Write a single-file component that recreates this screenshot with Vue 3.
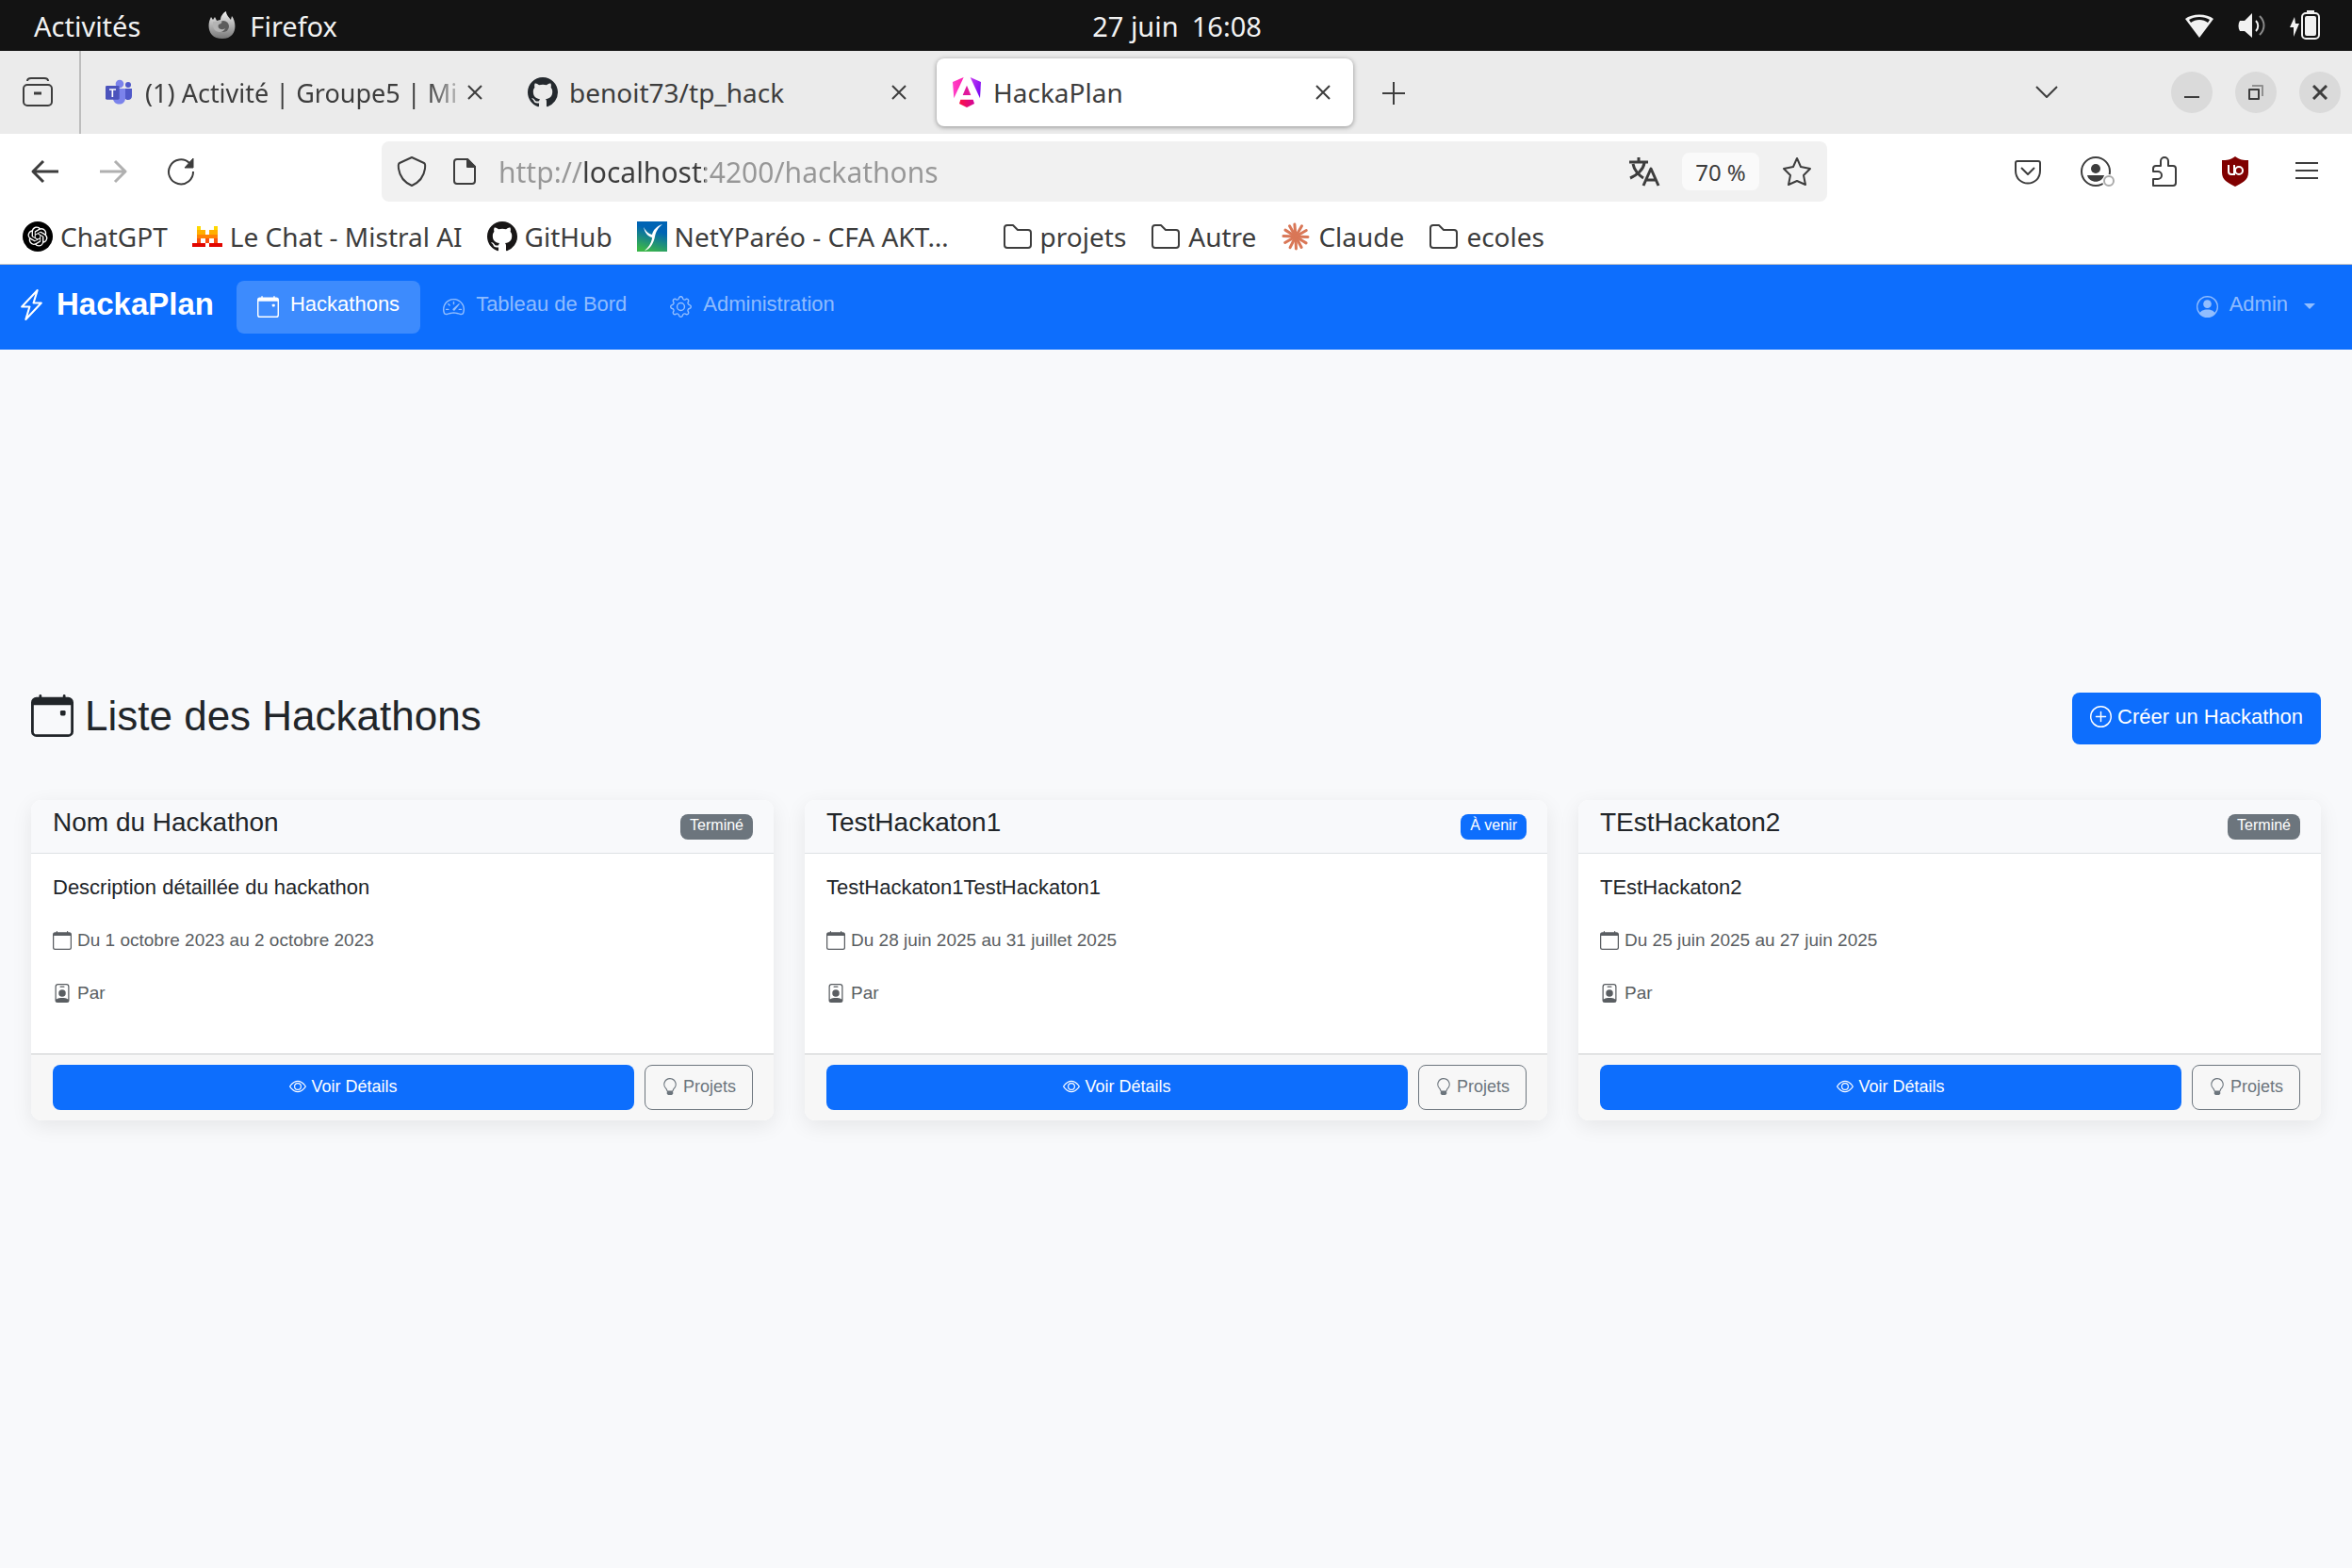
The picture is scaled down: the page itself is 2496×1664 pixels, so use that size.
<script setup>
import { h, ref } from 'vue'

const CALENDAR = 'M3.5 0a.5.5 0 0 1 .5.5V1h8V.5a.5.5 0 0 1 1 0V1h1a2 2 0 0 1 2 2v11a2 2 0 0 1-2 2H2a2 2 0 0 1-2-2V3a2 2 0 0 1 2-2h1V.5a.5.5 0 0 1 .5-.5M1 4v10a1 1 0 0 0 1 1h12a1 1 0 0 0 1-1V4z'

const icons = {
  calendar: [CALENDAR],
  calendarEvent: [CALENDAR, 'M11 6.5a.5.5 0 0 1 .5-.5h1a.5.5 0 0 1 .5.5v1a.5.5 0 0 1-.5.5h-1a.5.5 0 0 1-.5-.5z'],
  badge: [
    'M6.5 2a.5.5 0 0 0 0 1h3a.5.5 0 0 0 0-1zM11 8a3 3 0 1 1-6 0 3 3 0 0 1 6 0',
    'M4.5 0A2.5 2.5 0 0 0 2 2.5V14a2 2 0 0 0 2 2h8a2 2 0 0 0 2-2V2.5A2.5 2.5 0 0 0 11.5 0zM3 2.5A1.5 1.5 0 0 1 4.5 1h7A1.5 1.5 0 0 1 13 2.5v10.795a4.2 4.2 0 0 0-.776-.492C11.392 12.387 10.063 12 8 12s-3.392.387-4.224.803a4.2 4.2 0 0 0-.776.492z',
  ],
  eye: [
    'M16 8s-3-5.5-8-5.5S0 8 0 8s3 5.5 8 5.5S16 8 16 8M1.173 8a13 13 0 0 1 1.66-2.043C4.12 4.668 5.88 3.5 8 3.5s3.879 1.168 5.168 2.457A13 13 0 0 1 14.828 8q-.086.13-.195.288c-.335.48-.83 1.12-1.465 1.755C11.879 11.332 10.119 12.5 8 12.5s-3.879-1.168-5.168-2.457A13 13 0 0 1 1.172 8z',
    'M8 5.5a2.5 2.5 0 1 0 0 5 2.5 2.5 0 0 0 0-5M4.5 8a3.5 3.5 0 1 1 7 0 3.5 3.5 0 0 1-7 0',
  ],
  bulb: ['M2 6a6 6 0 1 1 10.174 4.31c-.203.196-.359.4-.453.619l-.762 1.769A.5.5 0 0 1 10.5 13a.5.5 0 0 1 0 1 .5.5 0 0 1 0 1l-.224.447a1 1 0 0 1-.894.553H6.618a1 1 0 0 1-.894-.553L5.5 15a.5.5 0 0 1 0-1 .5.5 0 0 1 0-1 .5.5 0 0 1-.46-.302l-.761-1.77a2 2 0 0 0-.453-.618A5.98 5.98 0 0 1 2 6m6-5a5 5 0 0 0-3.479 8.592c.263.254.514.564.676.941L5.83 12h4.342l.632-1.467c.162-.377.413-.687.676-.941A5 5 0 0 0 8 1'],
  plus: [
    'M8 15A7 7 0 1 1 8 1a7 7 0 0 1 0 14m0 1A8 8 0 1 0 8 0a8 8 0 0 0 0 16',
    'M8 4a.5.5 0 0 1 .5.5v3h3a.5.5 0 0 1 0 1h-3v3a.5.5 0 0 1-1 0v-3h-3a.5.5 0 0 1 0-1h3v-3A.5.5 0 0 1 8 4',
  ],
  bolt: ['M11.251.068a.5.5 0 0 1 .227.58L9.677 6.5H13a.5.5 0 0 1 .364.843l-8 8.5a.5.5 0 0 1-.842-.49L6.323 9.5H3a.5.5 0 0 1-.364-.843l8-8.5a.5.5 0 0 1 .615-.09zM4.157 8.5H7a.5.5 0 0 1 .478.647L6.11 13.59l5.732-6.09H9a.5.5 0 0 1-.478-.647L9.89 2.41z'],
  person: [
    'M11 6a3 3 0 1 1-6 0 3 3 0 0 1 6 0',
    'M0 8a8 8 0 1 1 16 0A8 8 0 0 1 0 8m8-7a7 7 0 0 0-5.468 11.37C3.242 11.226 4.805 10 8 10s4.757 1.225 5.468 2.37A7 7 0 0 0 8 1',
  ],
  speed: [
    'M8 4a.5.5 0 0 1 .5.5V6a.5.5 0 0 1-1 0V4.5A.5.5 0 0 1 8 4M3.732 5.732a.5.5 0 0 1 .707 0l.915.914a.5.5 0 1 1-.708.708l-.914-.915a.5.5 0 0 1 0-.707M2 10a.5.5 0 0 1 .5-.5h1.586a.5.5 0 0 1 0 1H2.5A.5.5 0 0 1 2 10m9.5 0a.5.5 0 0 1 .5-.5h1.5a.5.5 0 0 1 0 1H12a.5.5 0 0 1-.5-.5m.754-4.246a.39.39 0 0 0-.527-.02L7.547 9.31a.91.91 0 1 0 1.302 1.258l3.434-4.297a.39.39 0 0 0-.029-.518z',
    'M0 10a8 8 0 1 1 15.547 2.661c-.442 1.253-1.845 1.602-2.932 1.25C11.309 13.488 9.475 13 8 13c-1.474 0-3.31.488-4.615.911-1.087.352-2.49.003-2.932-1.25A8 8 0 0 1 0 10m8-7a7 7 0 0 0-6.603 9.329c.203.575.923.876 1.68.63C4.397 12.533 6.358 12 8 12s3.604.532 4.923.96c.757.245 1.477-.056 1.68-.631A7 7 0 0 0 8 3',
  ],
  gear: [
    'M8 4.754a3.246 3.246 0 1 0 0 6.492 3.246 3.246 0 0 0 0-6.492M5.754 8a2.246 2.246 0 1 1 4.492 0 2.246 2.246 0 0 1-4.492 0',
    'M9.796 1.343c-.527-1.79-3.065-1.79-3.592 0l-.094.319a.873.873 0 0 1-1.255.52l-.292-.16c-1.64-.892-3.433.902-2.54 2.541l.159.292a.873.873 0 0 1-.52 1.255l-.319.094c-1.79.527-1.79 3.065 0 3.592l.319.094a.873.873 0 0 1 .52 1.255l-.16.292c-.892 1.64.901 3.434 2.541 2.54l.292-.159a.873.873 0 0 1 1.255.52l.094.319c.527 1.79 3.065 1.79 3.592 0l.094-.319a.873.873 0 0 1 1.255-.52l.292.16c1.64.893 3.434-.902 2.54-2.541l-.159-.292a.873.873 0 0 1 .52-1.255l.319-.094c1.79-.527 1.79-3.065 0-3.592l-.319-.094a.873.873 0 0 1-.52-1.255l.16-.292c.893-1.64-.902-3.433-2.541-2.54l-.292.159a.873.873 0 0 1-1.255-.52zm-2.633.283c.246-.835 1.428-.835 1.674 0l.094.319a1.873 1.873 0 0 0 2.693 1.115l.291-.16c.764-.415 1.6.42 1.184 1.185l-.159.292a1.873 1.873 0 0 0 1.116 2.692l.318.094c.835.246.835 1.428 0 1.674l-.319.094a1.873 1.873 0 0 0-1.115 2.693l.16.291c.415.764-.42 1.6-1.185 1.184l-.291-.159a1.873 1.873 0 0 0-2.693 1.116l-.094.318c-.246.835-1.428.835-1.674 0l-.094-.319a1.873 1.873 0 0 0-2.692-1.115l-.292.16c-.764.415-1.6-.42-1.184-1.185l.159-.291A1.873 1.873 0 0 0 1.945 8.93l-.319-.094c-.835-.246-.835-1.428 0-1.674l.319-.094A1.873 1.873 0 0 0 3.06 4.377l-.16-.292c-.415-.764.42-1.6 1.185-1.184l.292.159a1.873 1.873 0 0 0 2.692-1.115z',
  ],
  github: ['M8 0C3.58 0 0 3.58 0 8c0 3.54 2.29 6.53 5.47 7.59.4.07.55-.17.55-.38 0-.19-.01-.82-.01-1.49-2.01.37-2.53-.49-2.69-.94-.09-.23-.48-.94-.82-1.13-.28-.15-.68-.52-.01-.53.63-.01 1.08.58 1.23.82.72 1.21 1.87.87 2.33.66.07-.52.28-.87.51-1.07-1.78-.2-3.64-.89-3.64-3.95 0-.87.31-1.59.82-2.15-.08-.2-.36-1.02.08-2.12 0 0 .67-.21 2.2.82.64-.18 1.32-.27 2-.27s1.36.09 2 .27c1.53-1.04 2.2-.82 2.2-.82.44 1.1.16 1.92.08 2.12.51.56.82 1.27.82 2.15 0 3.07-1.87 3.75-3.65 3.95.29.25.54.73.54 1.48 0 1.07-.01 1.93-.01 2.2 0 .21.15.46.55.38A8.01 8.01 0 0 0 16 8c0-4.42-3.58-8-8-8'],
}

const Icon = (props) =>
  h('svg', { viewBox: '0 0 16 16', fill: 'currentColor', 'aria-hidden': 'true' },
    icons[props.name].map((d) => h('path', { d, 'fill-rule': props.name === 'person' ? 'evenodd' : undefined })))
Icon.props = ['name']

const address = ref('http://localhost:4200/hackathons')
const rays = [2, 32, 62, 88, 117, 150, 182, 212, 240, 265, 300, 330]

const hackathons = [
  { name: 'Nom du Hackathon', status: 'Terminé', text: 'Description détaillée du hackathon', dates: 'Du 1 octobre 2023 au 2 octobre 2023' },
  { name: 'TestHackaton1', status: 'À venir', text: 'TestHackaton1TestHackaton1', dates: 'Du 28 juin 2025 au 31 juillet 2025' },
  { name: 'TEstHackaton2', status: 'Terminé', text: 'TEstHackaton2', dates: 'Du 25 juin 2025 au 27 juin 2025' },
]
</script>

<template>
  <div class="screen">
    <header class="system">
      <div class="system-left">
        <button class="plain">Activités</button>
        <button class="plain app-menu">
          <svg width="30" height="30" viewBox="0 0 30 30" aria-hidden="true">
            <defs><linearGradient id="fox" x1="0" y1="0" x2="0" y2="1"><stop offset="0" stop-color="#f2f2f2" /><stop offset="1" stop-color="#777" /></linearGradient></defs>
            <path d="M3 6l2 3 2-3 2 4 4-1c0-3 2-7 6-9 0 4 3 6 5 9l1-4c6 8 5 24-10 24C0 29-2 15 3 6z" fill="url(#fox)" />
            <circle cx="16" cy="16" r="6" fill="#5c5c5c" />
            <path d="M5 11l9-1c1 2 0 3-3 4-2 4 3 7 7 4-2 6-12 5-13-2z" fill="#b4b4b4" />
          </svg>
          <span>Firefox</span>
        </button>
      </div>
      <time class="clock" datetime="2025-06-27T16:08"><span>27 juin</span><span>16:08</span></time>
      <div class="tray">
        <svg width="32" height="32" viewBox="0 0 32 32" aria-label="Wi-Fi">
          <path d="M16 29L1 9C8 3 24 3 31 9z" fill="#f2f2f2" />
          <path d="M5 10c6-4 16-4 22 0l-2 3c-5-4-13-4-18 0z" fill="#131313" />
        </svg>
        <svg width="32" height="32" viewBox="0 0 32 32" fill="none" aria-label="Volume">
          <path d="M3 11h5l8-8v26l-8-7H3c-2-3-2-8 0-11z" fill="#f2f2f2" />
          <path d="M20 11c3 3 3 8 0 11" stroke="#f2f2f2" stroke-width="2" /><path d="M24 6c6 6 6 14 0 20" stroke="#8a8a8a" stroke-width="2" />
        </svg>
        <svg width="32" height="32" viewBox="0 0 32 32" aria-label="Batterie en charge">
          <path d="M5 7L0 18h4v10l6-14H6z" fill="#f2f2f2" />
          <rect x="18" y="0" width="8" height="4" fill="#f2f2f2" /><rect x="13" y="3" width="18" height="27" rx="4" fill="none" stroke="#f2f2f2" stroke-width="2" /><rect x="16" y="6" width="12" height="21" rx="2" fill="#f2f2f2" />
        </svg>
      </div>
    </header>

    <div class="tabbar">
      <button class="plain view-all" aria-label="Firefox View">
        <svg class="i32 line" viewBox="0 0 32 32"><path d="M5 4c0-2 2-3 4-3h14c2 0 4 1 4 3" /><rect x="1" y="8" width="30" height="22" rx="4" /><path d="M12 17h8" stroke-width="3" /></svg>
      </button>
      <div class="tabs" role="tablist">
        <div class="tab" role="tab">
          <svg class="i32" viewBox="-6 -6 96 96" aria-hidden="true">
            <circle cx="72" cy="18" r="9" fill="#5059c9" /><path d="M56 30h28v24c0 16-22 16-24 2z" fill="#5059c9" />
            <circle cx="45" cy="15" r="13" fill="#7b83eb" /><path d="M28 30h35v30c0 26-37 26-39 2z" fill="#7b83eb" />
            <rect x="0" y="21" width="44" height="44" rx="4" fill="#4b53bc" /><path d="M12 33h21M22 33v24" stroke="#fff" stroke-width="5" />
          </svg>
          <span class="tab-label fade">(1) Activité | Groupe5 | Mi</span>
          <button class="plain close" aria-label="Fermer"><svg class="i16 line" viewBox="0 0 16 16"><path d="M1 1l14 14M15 1L1 15" /></svg></button>
        </div>
        <div class="tab" role="tab">
          <Icon name="github" class="i32 mark" />
          <span class="tab-label">benoit73/tp_hack</span>
          <button class="plain close" aria-label="Fermer"><svg class="i16 line" viewBox="0 0 16 16"><path d="M1 1l14 14M15 1L1 15" /></svg></button>
        </div>
        <div class="tab active" role="tab">
          <svg class="i32" viewBox="90 96 96 96" aria-hidden="true">
            <defs><linearGradient id="ng" x1="0" y1="0" x2="1" y2="0"><stop offset="0" stop-color="#ff41c8" /><stop offset="1" stop-color="#ff1fb0" /></linearGradient><linearGradient id="ng2" x1="0" y1="0" x2="1" y2="1"><stop offset="0" stop-color="#c93df0" /><stop offset="1" stop-color="#6a00f5" /></linearGradient><linearGradient id="ng3" x1="0" y1="0" x2="1" y2="0"><stop offset="0" stop-color="#ff1040" /><stop offset="1" stop-color="#d1059a" /></linearGradient></defs>
            <path d="M93 111l35-15-31 67z" fill="url(#ng)" /><path d="M149 96l34 15-3 52z" fill="url(#ng2)" />
            <path d="M138 122l13 31h-26z" fill="#e0189c" /><path d="M118 167h40l4 13-24 12-24-12z" fill="url(#ng3)" />
          </svg>
          <span class="tab-label">HackaPlan</span>
          <button class="plain close" aria-label="Fermer"><svg class="i16 line" viewBox="0 0 16 16"><path d="M1 1l14 14M15 1L1 15" /></svg></button>
        </div>
      </div>
      <button class="plain new-tab" aria-label="Nouvel onglet"><svg class="i32 line" viewBox="0 0 32 32"><path d="M16 5v24M4 17h24" /></svg></button>
      <div class="window">
        <button class="plain all-tabs" aria-label="Lister les onglets"><svg class="i32 line" viewBox="0 0 32 32"><path d="M5 10l11 11 11-11" /></svg></button>
        <button class="plain round" aria-label="Réduire"><svg class="i16 line" viewBox="0 0 16 16"><path d="M0 13h16" /></svg></button>
        <button class="plain round" aria-label="Restaurer"><svg class="i16 line" viewBox="0 0 16 16"><path d="M4 1h11v11" stroke="#909090" /><rect x="1" y="5" width="10" height="10" /></svg></button>
        <button class="plain round" aria-label="Fermer la fenêtre"><svg class="i16 line" viewBox="0 0 16 16"><path d="M1 1l14 14M15 1L1 15" stroke-width="3" /></svg></button>
      </div>
    </div>

    <div class="toolbar">
      <div class="history">
        <button class="plain" aria-label="Précédent"><svg class="i32 line" viewBox="0 0 32 32"><path d="M30 16H4M14 5L3 16l11 11" stroke-width="3" /></svg></button>
        <button class="plain off" aria-label="Suivant"><svg class="i32 line" viewBox="0 0 32 32"><path d="M2 16h26M18 5l11 11-11 11" stroke-width="3" /></svg></button>
        <button class="plain" aria-label="Actualiser"><svg class="i32 line" viewBox="0 0 32 32"><path d="M29 16a13 13 0 1 1-4-9" /><path d="M29 2v10H20z" fill="#3d3d3d" stroke-width="1" /></svg></button>
      </div>
      <div class="address">
        <svg class="i32 line" viewBox="0 0 32 32" aria-hidden="true"><path d="M16 1l13 6c2 1 1 4 1 6-1 7-5 14-14 18C7 27 3 20 2 13c0-2-1-5 1-6z" /></svg>
        <svg class="i32 line doc" viewBox="0 0 32 32" aria-hidden="true"><path d="M19 3H8a3 3 0 0 0-3 3v20a3 3 0 0 0 3 3h16a3 3 0 0 0 3-3V11z" /><path d="M19 3v8h8z" fill="#3d3d3d" /></svg>
        <input v-model="address" class="url" aria-label="Adresse" spellcheck="false" />
        <button class="plain" aria-label="Traduire"><svg class="i32 line" viewBox="0 0 32 32"><path d="M0 6h20M10 1v5M4 8c1 6 6 12 11 15M16 7C15 14 8 20 1 23" stroke-width="3" /><path d="M15 31l8-18 8 18M18 25h10" stroke-width="3" /></svg></button>
        <button class="plain zoom">70 %</button>
        <button class="plain" aria-label="Marquer cette page"><svg class="i32 line" viewBox="0 0 32 32"><path d="M16 2l4 9 10 2-7 7 2 10-9-4-9 4 2-10-7-7 10-2z" /></svg></button>
      </div>
      <div class="tools">
        <button class="plain" aria-label="Pocket"><svg class="i32 line" viewBox="0 0 32 32"><path d="M5 5h22a2 2 0 0 1 2 2v8c0 18-26 18-26 0V7a2 2 0 0 1 2-2z" /><path d="M9 12l7 7 7-7" /></svg></button>
        <button class="plain account" aria-label="Compte"><svg class="i32 line" viewBox="0 0 32 32"><circle cx="14" cy="16" r="15" /><circle cx="14" cy="13" r="5" fill="#3d3d3d" stroke="none" /><path d="M5 20h18c-2 9-16 9-18 0z" fill="#3d3d3d" stroke="none" /><circle cx="28" cy="26" r="7" fill="#fff" stroke="none" /><circle cx="28" cy="26" r="5" stroke="#aaa" /></svg></button>
        <button class="plain" aria-label="Extensions"><svg class="i32 line" viewBox="3 0 32 32"><path d="M4 31h21a3 3 0 0 0 3-3V13a3 3 0 0 0-3-3h-5V5a4 4 0 0 0-8 0v5H7a3 3 0 0 0-3 3v3h5a4 4 0 0 1 0 8H4z" /></svg></button>
        <button class="plain" aria-label="uBlock Origin"><svg class="i32" viewBox="2 0 32 32"><path d="M16 0c5 4 9 4 14 4v13c0 8-6 11-14 15C8 28 2 25 2 17V4c5 0 9 0 14-4z" fill="#800000" /><path d="M9 9v7a3 3 0 0 0 3 3h3V9" fill="none" stroke="#fff" stroke-width="2" /><circle cx="20" cy="15" r="4" fill="none" stroke="#fff" stroke-width="2" /></svg></button>
        <button class="plain" aria-label="Menu"><svg class="i32 line" viewBox="0 0 32 32"><path d="M4 7h24M4 15h24M4 23h24" /></svg></button>
      </div>
    </div>

    <nav class="bookmarks" aria-label="Marque-pages">
      <a href="#">
        <svg class="i32" viewBox="0 0 32 32" aria-hidden="true"><circle cx="16" cy="16" r="16" /><g transform="translate(5.5 5.5) scale(.875)" fill="#fff"><path d="M22.2819 9.8211a5.9847 5.9847 0 0 0-.5157-4.9108 6.0462 6.0462 0 0 0-6.5098-2.9A6.0651 6.0651 0 0 0 4.9807 4.1818a5.9847 5.9847 0 0 0-3.9977 2.9 6.0462 6.0462 0 0 0 .7427 7.0966 5.98 5.98 0 0 0 .511 4.9107 6.051 6.051 0 0 0 6.5146 2.9001A5.9847 5.9847 0 0 0 13.2599 24a6.0557 6.0557 0 0 0 5.7718-4.2058 5.9894 5.9894 0 0 0 3.9977-2.9001 6.0557 6.0557 0 0 0-.7475-7.0729zm-9.022 12.6081a4.4755 4.4755 0 0 1-2.8764-1.0408l.1419-.0804 4.7783-2.7582a.7948.7948 0 0 0 .3927-.6813v-6.7369l2.02 1.1686a.071.071 0 0 1 .038.052v5.5826a4.504 4.504 0 0 1-4.4945 4.4944zm-9.6607-4.1254a4.4708 4.4708 0 0 1-.5346-3.0137l.142.0852 4.783 2.7582a.7712.7712 0 0 0 .7806 0l5.8428-3.3685v2.3324a.0804.0804 0 0 1-.0332.0615L9.74 19.9502a4.4992 4.4992 0 0 1-6.1408-1.6464zM2.3408 7.8956a4.485 4.485 0 0 1 2.3655-1.9728V11.6a.7664.7664 0 0 0 .3879.6765l5.8144 3.3543-2.0201 1.1685a.0757.0757 0 0 1-.071 0l-4.8303-2.7865A4.504 4.504 0 0 1 2.3408 7.872zm16.5963 3.8558L13.1038 8.364 15.1192 7.2a.0757.0757 0 0 1 .071 0l4.8303 2.7913a4.4944 4.4944 0 0 1-.6765 8.1042v-5.6772a.79.79 0 0 0-.407-.667zm2.0107-3.0231l-.142-.0852-4.7735-2.7818a.7759.7759 0 0 0-.7854 0L9.409 9.2297V6.8974a.0662.0662 0 0 1 .0284-.0615l4.8303-2.7866a4.4992 4.4992 0 0 1 6.6802 4.66zM8.3065 12.863l-2.02-1.1638a.0804.0804 0 0 1-.038-.0567V6.0742a4.4992 4.4992 0 0 1 7.3757-3.4537l-.142.0805L8.704 5.459a.7948.7948 0 0 0-.3927.6813zm1.0976-2.3654l2.602-1.4998 2.6069 1.4998v2.9994l-2.5974 1.4997-2.6067-1.4997Z" /></g></svg>
        <span>ChatGPT</span>
      </a>
      <a href="#">
        <svg class="i32" viewBox="0 0 7 7" aria-hidden="true" shape-rendering="crispEdges"><path d="M1 1h1v1H1zM5 1h1v1H5z" fill="#ffd800" /><path d="M1 2h2v1H1zM4 2h2v1H4z" fill="#ffaf00" /><path d="M1 3h5v1H1z" fill="#ff8205" /><path d="M1 4h1v1H1zM3 4h1v1H3zM5 4h1v1H5z" fill="#fa500f" /><path d="M0 5h3v1H0zM4 5h3v1H4z" fill="#e10500" /></svg>
        <span>Le Chat - Mistral AI</span>
      </a>
      <a href="#"><Icon name="github" class="i32 mark-dark" /><span>GitHub</span></a>
      <a href="#">
        <svg class="i32" viewBox="0 0 32 32" aria-hidden="true"><defs><linearGradient id="nety" x1=".7" y1="0" x2=".4" y2="1"><stop offset=".3" stop-color="#0064b4" /><stop offset="1" stop-color="#3ab54a" /></linearGradient></defs><rect width="32" height="32" fill="url(#nety)" /><path d="M7 6c2 4 5 7 9 8 1-5 5-9 11-11-5 4-7 8-8 13-1 6-5 14-11 15 5-4 8-10 8-14-5-1-8-6-9-11z" fill="#fff" /></svg>
        <span class="clipped">NetYParéo - CFA AKT…</span>
      </a>
      <a href="#"><svg class="i32 line" viewBox="0 0 32 32" aria-hidden="true"><path d="M2 7a3 3 0 0 1 3-3h6l5 5h11a3 3 0 0 1 3 3v13a3 3 0 0 1-3 3H5a3 3 0 0 1-3-3z" /></svg><span>projets</span></a>
      <a href="#"><svg class="i32 line" viewBox="0 0 32 32" aria-hidden="true"><path d="M2 7a3 3 0 0 1 3-3h6l5 5h11a3 3 0 0 1 3 3v13a3 3 0 0 1-3 3H5a3 3 0 0 1-3-3z" /></svg><span>Autre</span></a>
      <a href="#">
        <svg class="i32" viewBox="-16 -16 32 32" stroke="#d97757" stroke-width="3" stroke-linecap="round" aria-hidden="true"><path v-for="r in rays" :key="r" d="M0 0H13" :transform="`rotate(${r})`" /></svg>
        <span>Claude</span>
      </a>
      <a href="#"><svg class="i32 line" viewBox="0 0 32 32" aria-hidden="true"><path d="M2 7a3 3 0 0 1 3-3h6l5 5h11a3 3 0 0 1 3 3v13a3 3 0 0 1-3 3H5a3 3 0 0 1-3-3z" /></svg><span>ecoles</span></a>
    </nav>

    <div class="site">
      <nav class="navbar">
        <a class="brand" href="#"><Icon name="bolt" class="i33" /><span>HackaPlan</span></a>
        <a class="nav-link current" href="#"><Icon name="calendarEvent" class="i23" /><span>Hackathons</span></a>
        <a class="nav-link" href="#"><Icon name="speed" class="i23" /><span>Tableau de Bord</span></a>
        <a class="nav-link" href="#"><Icon name="gear" class="i23" /><span>Administration</span></a>
        <button class="nav-link user"><Icon name="person" class="i23" /><span>Admin</span><i class="caret"></i></button>
      </nav>

      <main>
        <div class="heading">
          <h1><Icon name="calendarEvent" class="i45" /><span>Liste des Hackathons</span></h1>
          <button class="create"><Icon name="plus" class="i23" /><span>Créer un Hackathon</span></button>
        </div>
        <div class="cards">
          <article v-for="item in hackathons" :key="item.name" class="card">
            <header class="card-head">
              <h2>{{ item.name }}</h2>
              <span class="status" :class="{ upcoming: item.status === 'À venir' }">{{ item.status }}</span>
            </header>
            <div class="card-body">
              <p>{{ item.text }}</p>
              <p class="meta"><Icon name="calendar" class="i20" /><span>{{ item.dates }}</span></p>
              <p class="meta"><Icon name="badge" class="i20" /><span>Par</span></p>
            </div>
            <footer class="card-foot">
              <button class="details"><Icon name="eye" class="i18" /><span>Voir Détails</span></button>
              <button class="projects"><Icon name="bulb" class="i18" /><span>Projets</span></button>
            </footer>
          </article>
        </div>
      </main>
    </div>
  </div>
</template>

<style>
body { margin: 0; background: #f8f9fb; }
</style>

<style scoped>
.screen { min-height: 100vh; font-family: "Noto Sans", sans-serif; font-size: 29px; color: #3d3d3d; }
.screen * { box-sizing: border-box; }
svg { display: block; flex: none; }
a { color: inherit; text-decoration: none; }
.plain { display: flex; align-items: center; padding: 0; border: 0; background: none; color: inherit; font: inherit; }
.line { fill: none; stroke: #3d3d3d; stroke-width: 2; stroke-linejoin: round; }
.i16 { width: 16px; height: 16px; }
.i18 { width: 18px; height: 18px; }
.i20 { width: 20px; height: 20px; }
.i23 { width: 23px; height: 23px; }
.i32 { width: 32px; height: 32px; overflow: visible; }
.i33 { width: 33px; height: 33px; }
.i45 { width: 45px; height: 45px; }
.mark { color: #24292e; }
.mark-dark { color: #181616; }

.system { display: grid; grid-template-columns: 1fr auto 1fr; align-items: center; height: 54px; padding: 0 34px 0 36px; background: #131313; color: #f2f2f2; }
.system-left { display: flex; gap: 72px; }
.app-menu { gap: 14px; }
.clock { display: flex; gap: 14px; }
.tray { display: flex; justify-content: flex-end; gap: 24px; }

.tabbar { display: flex; align-items: center; height: 88px; background: #ebebeb; font-size: 28px; }
.view-all { width: 86px; height: 88px; padding-left: 24px; border-right: 2px solid #bdbdbd; }
.tabs { display: flex; gap: 8px; margin-left: 8px; }
.tab { display: flex; align-items: center; gap: 12px; width: 442px; height: 72px; padding: 0 16px; border-radius: 8px; }
.tab.active { background: #fff; box-shadow: 0 1px 5px rgba(0, 0, 0, .4); }
.tab-label { flex: 1; white-space: nowrap; }
.tab-label.fade { margin-right: -12px; font-size: 27px; mask-image: linear-gradient(90deg, #000 300px, transparent 345px); }
.close { padding: 8px; }
.new-tab { margin-left: 27px; }
.window { display: flex; align-items: center; gap: 24px; margin-left: auto; padding-right: 12px; }
.all-tabs { margin-right: 92px; }
.round { justify-content: center; width: 44px; height: 44px; border-radius: 50%; background: #dadada; }

.toolbar { display: grid; grid-template-columns: 405px 1fr 557px; align-items: center; height: 80px; background: #fff; }
.history { display: flex; gap: 40px; padding-left: 32px; }
.off { opacity: .4; }
.address { display: flex; align-items: center; height: 64px; padding: 0 16px; border-radius: 8px; background: #f1f1f1; }
.doc { margin: 0 20px 0 24px; }
.url { flex: 1; min-width: 0; height: 48px; padding: 0; border: 0; outline: 0; color: #979797; font: 30px "Noto Sans", sans-serif; -webkit-text-fill-color: transparent; background: linear-gradient(90deg, #979797 90px, #3d3d3d 90px 219px, #979797 219px); -webkit-background-clip: text; background-clip: text; }
.zoom { justify-content: center; width: 82px; height: 40px; margin: 0 24px; border-radius: 8px; background: #fafafa; font-size: 24px; }
.tools { display: flex; justify-content: flex-end; gap: 42px; padding-right: 32px; }

.bookmarks { display: flex; align-items: center; gap: 26px; height: 59px; padding: 0 24px; border-bottom: 1px solid #c4c4c4; background: #fff; font-size: 28px; }
.bookmarks a { display: flex; align-items: center; gap: 8px; }
.clipped { width: 322px; white-space: nowrap; }

.site { font-family: "Liberation Sans", Arial, sans-serif; font-size: 22px; line-height: 34px; color: #212529; }
.site button { font: inherit; }
.navbar { display: flex; align-items: center; gap: 2px; height: 90px; padding: 0 17px; background: #0d6efd; }
.brand { display: flex; align-items: center; gap: 10px; margin-right: 22px; padding-bottom: 6px; color: #fff; font-size: 33px; font-weight: 700; }
.nav-link { display: flex; align-items: center; gap: 12px; height: 56px; padding: 0 22px 2px; border: 0; border-radius: 8px; background: none; color: rgba(255, 255, 255, .55); }
.nav-link span { padding-bottom: 4px; }
.nav-link.current { background: rgba(255, 255, 255, .2); color: #fff; }
.nav-link.user { margin-left: auto; }
.caret { margin-left: 5px; border: 6px solid transparent; border-top-color: currentColor; border-bottom: 0; }

main { padding: 364px 33px 33px; }
.heading { display: flex; align-items: center; justify-content: space-between; margin-bottom: 59px; }
h1 { display: flex; align-items: center; gap: 12px; margin: 0; padding-bottom: 6px; font-size: 44px; font-weight: 400; line-height: 48px; }
.create, .details, .projects { display: flex; align-items: center; justify-content: center; border: 0; border-radius: 8px; background: #0d6efd; color: #fff; }
.create { gap: 6px; height: 55px; padding: 0 19px 4px; }
.cards { display: grid; grid-template-columns: repeat(3, 1fr); gap: 33px; }
.card { border-radius: 11px; background: #fff; box-shadow: 0 6px 22px rgba(0, 0, 0, .08); overflow: hidden; }
.card-head { display: flex; align-items: center; justify-content: space-between; height: 57px; padding: 0 22px 0 23px; border-bottom: 1px solid #dee1e4; background: #f8f9fb; }
h2 { margin: 0; padding-bottom: 8px; font-size: 28px; font-weight: 400; line-height: 26px; }
.status { padding: 1px 10px 4px; border-radius: 8px; background: #6c757d; color: #fff; font-size: 16px; line-height: 22px; }
.status.upcoming { background: #0d6efd; }
.card-body { padding: 19px 22px 47px 23px; }
.card-body p { margin: 0 0 22px; }
.card-body p:last-child { margin: 0; }
.card-body .meta { display: flex; align-items: center; gap: 6px; color: #5a5e62; font-size: 19px; }
.card-foot { display: flex; gap: 11px; padding: 11px 22px 11px 23px; border-top: 1px solid #c9cbcc; background: #f7f7f7; }
.site .details, .site .projects { gap: 5px; height: 48px; padding: 0 17px 3px; font-size: 18px; }
.details { flex: 1; }
.projects { border: 1px solid #6c757d; background: none; color: #6c757d; }
</style>
